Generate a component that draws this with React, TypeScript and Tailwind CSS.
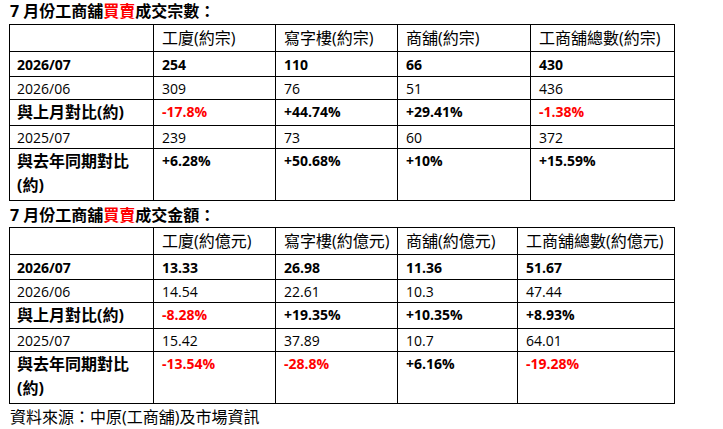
type Cell = { v: string; red?: boolean };
type Row = { label: string; kind: "bold" | "plain" | "cmp" | "cmp2"; cells: Cell[] };

const t1Heads = ["工廈(約宗)", "寫字樓(約宗)", "商舖(約宗)", "工商舖總數(約宗)"];
const t1Rows: Row[] = [
  { label: "2026/07", kind: "bold", cells: [{ v: "254" }, { v: "110" }, { v: "66" }, { v: "430" }] },
  { label: "2026/06", kind: "plain", cells: [{ v: "309" }, { v: "76" }, { v: "51" }, { v: "436" }] },
  { label: "與上月對比(約)", kind: "cmp", cells: [{ v: "-17.8%", red: true }, { v: "+44.74%" }, { v: "+29.41%" }, { v: "-1.38%", red: true }] },
  { label: "2025/07", kind: "plain", cells: [{ v: "239" }, { v: "73" }, { v: "60" }, { v: "372" }] },
  { label: "與去年同期對比", kind: "cmp2", cells: [{ v: "+6.28%" }, { v: "+50.68%" }, { v: "+10%" }, { v: "+15.59%" }] },
];

const t2Heads = ["工廈(約億元)", "寫字樓(約億元)", "商舖(約億元)", "工商舖總數(約億元)"];
const t2Rows: Row[] = [
  { label: "2026/07", kind: "bold", cells: [{ v: "13.33" }, { v: "26.98" }, { v: "11.36" }, { v: "51.67" }] },
  { label: "2026/06", kind: "plain", cells: [{ v: "14.54" }, { v: "22.61" }, { v: "10.3" }, { v: "47.44" }] },
  { label: "與上月對比(約)", kind: "cmp", cells: [{ v: "-8.28%", red: true }, { v: "+19.35%" }, { v: "+10.35%" }, { v: "+8.93%" }] },
  { label: "2025/07", kind: "plain", cells: [{ v: "15.42" }, { v: "37.89" }, { v: "10.7" }, { v: "64.01" }] },
  { label: "與去年同期對比", kind: "cmp2", cells: [{ v: "-13.54%", red: true }, { v: "-28.8%", red: true }, { v: "+6.16%" }, { v: "-19.28%", red: true }] },
];

const rowH: Record<Row["kind"], string> = {
  bold: "h-[25px]",
  plain: "h-[22px]",
  cmp: "h-[26px]",
  cmp2: "h-[52px]",
};

function Title({ what }: { what: string }) {
  return (
    <div className="text-[16px] font-bold leading-[22px] pl-[10px]">
      7 月份工商舖<span className="text-[#ff0000]">買賣</span>
      {what}：
    </div>
  );
}

function DataTable({ heads, rows, widths }: { heads: string[]; rows: Row[]; widths: string[] }) {
  return (
    <table className="ml-[9px] w-[665px] table-fixed border-collapse">
      <colgroup>
        <col className="w-[144px]" />
        {widths.map((w, i) => (
          <col key={i} className={w} />
        ))}
      </colgroup>
      <tbody>
        <tr className="h-[27px]">
          <td className="border border-black" />
          {heads.map((h) => (
            <td key={h} className="border border-black align-top px-[8px] pt-[2px] text-[16px] leading-[22px] whitespace-nowrap">
              {h}
            </td>
          ))}
        </tr>
        {rows.map((r) => {
          const big = r.kind === "cmp" || r.kind === "cmp2";
          return (
            <tr key={r.label} className={rowH[r.kind]}>
              <td
                className={`border border-black align-top px-[7px] ${
                  big ? "text-[16px] font-bold leading-[24px] pt-0" : "text-[14px] leading-[20px] pt-[2px]"
                } ${r.kind === "bold" ? "font-bold pt-[3px]" : ""}`}
              >
                {r.label}
                {r.kind === "cmp2" && (
                  <>
                    <br />
                    (約)
                  </>
                )}
              </td>
              {r.cells.map((c, i) => (
                <td
                  key={i}
                  className={`border border-black align-top px-[8px] text-[14px] leading-[20px] ${
                    r.kind === "plain" ? "pt-[2px]" : "font-bold"
                  } ${r.kind === "bold" ? "pt-[3px]" : ""} ${big ? "pt-[2px]" : ""} ${c.red ? "text-[#ff0000]" : ""}`}
                >
                  {c.v}
                </td>
              ))}
            </tr>
          );
        })}
      </tbody>
    </table>
  );
}

export default function App() {
  return (
    <div className="w-[723px] h-[429px] bg-white text-black font-['Open_Sans','Noto_Sans_CJK_TC',sans-serif]">
      <div className="h-[24px]">
        <Title what="成交宗數" />
      </div>
      <DataTable heads={t1Heads} rows={t1Rows} widths={["w-[122px]", "w-[122px]", "w-[133px]", "w-[144px]"]} />
      <div className="h-[26px] pt-[3px]">
        <Title what="成交金額" />
      </div>
      <DataTable heads={t2Heads} rows={t2Rows} widths={["w-[122px]", "w-[122px]", "w-[120px]", "w-[157px]"]} />
      <div className="text-[16px] leading-[22px] pl-[10px] pt-[2px]">資料來源：中原(工商舖)及市場資訊</div>
    </div>
  );
}
